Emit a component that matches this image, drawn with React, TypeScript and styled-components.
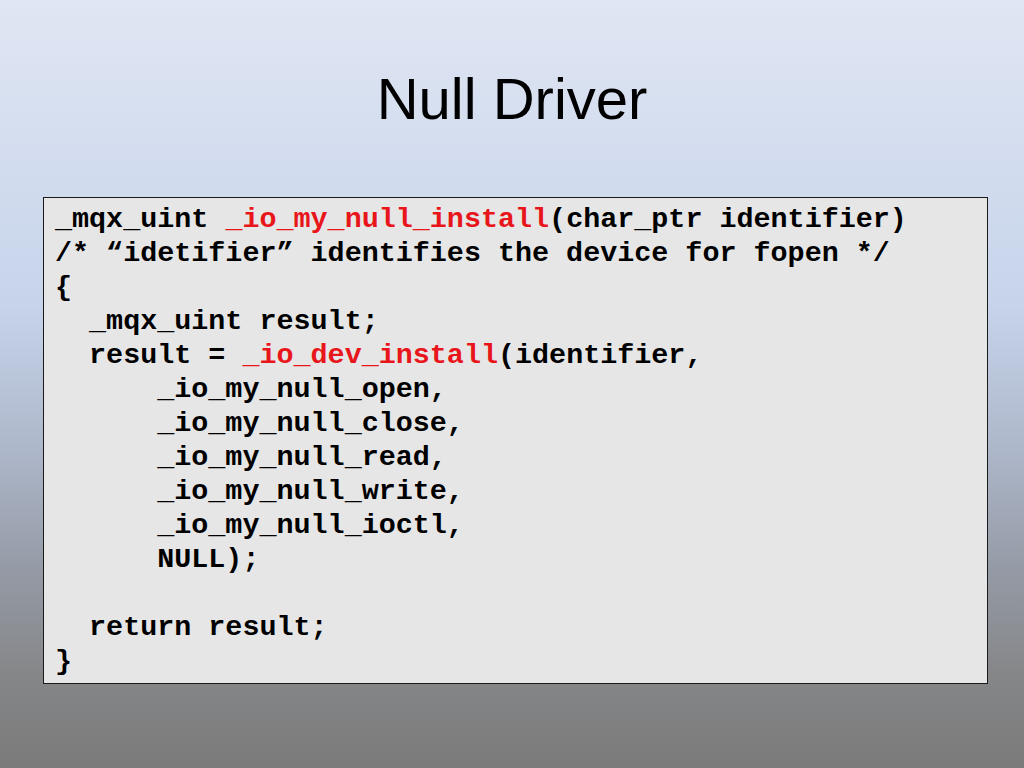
import React from "react";
import styled, { createGlobalStyle } from "styled-components";

const Global = createGlobalStyle`
  html, body { margin: 0; padding: 0; }
  body { width: 1024px; height: 768px; overflow: hidden; }
`;

const Slide = styled.div`
  width: 1024px;
  height: 768px;
  display: flex;
  flex-direction: column;
  background: linear-gradient(
    to bottom,
    #e0e6f3 0%,
    #d3ddef 20%,
    #c6d3ea 40%,
    #aeb8cb 58%,
    #959ba6 74%,
    #858688 88%,
    #7b7b7b 100%
  );
`;

const Header = styled.header`
  height: 197px;
  display: flex;
  align-items: center;
  justify-content: center;
`;

const Title = styled.h1`
  margin: 0;
  font-family: "Liberation Sans", Arial, sans-serif;
  font-weight: 400;
  font-size: 58px;
  color: #000;
`;

const CodeBox = styled.pre`
  margin: 0 0 0 43px;
  width: 945px;
  box-sizing: border-box;
  height: 487px;
  border: 1.5px solid #1a1a1a;
  background: #e6e6e6;
  padding: 5px 0 0 11px;
  font-family: "Liberation Mono", "Courier New", monospace;
  font-weight: 700;
  font-size: 28.4px;
  line-height: 34px;
  color: #000;
  white-space: pre;
`;

const Fn = styled.span`
  color: #e8161b;
`;

export default function App() {
  return (
    <>
      <Global />
      <Slide>
        <Header>
          <Title>Null Driver</Title>
        </Header>
        <CodeBox>
          {"_mqx_uint "}<Fn>_io_my_null_install</Fn>{"(char_ptr identifier)\n"}
          {"/* \u201cidetifier\u201d identifies the device for fopen */\n"}
          {"{\n"}
          {"  _mqx_uint result;\n"}
          {"  result = "}<Fn>_io_dev_install</Fn>{"(identifier,\n"}
          {"      _io_my_null_open,\n"}
          {"      _io_my_null_close,\n"}
          {"      _io_my_null_read,\n"}
          {"      _io_my_null_write,\n"}
          {"      _io_my_null_ioctl,\n"}
          {"      NULL);\n"}
          {"\n"}
          {"  return result;\n"}
          {"}"}
        </CodeBox>
      </Slide>
    </>
  );
}
